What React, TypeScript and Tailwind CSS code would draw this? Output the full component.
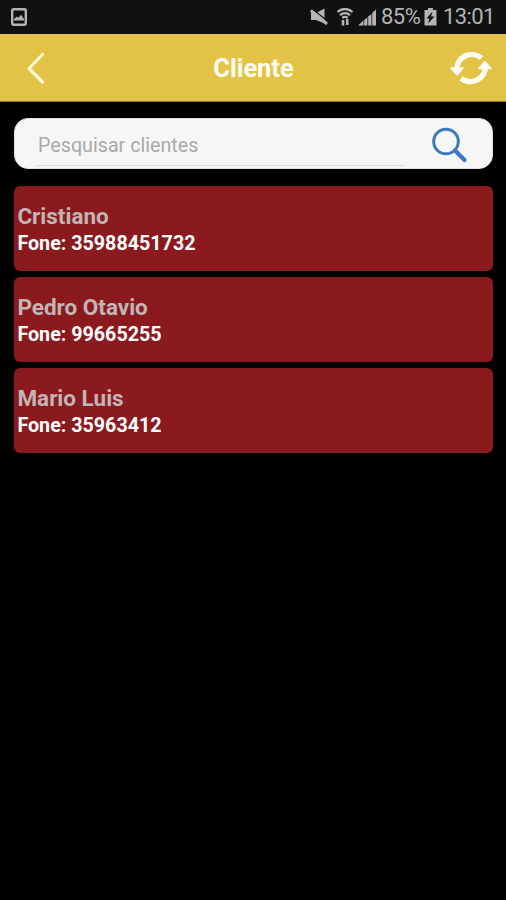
interface Client {
  name: string;
  phone: string;
}

const clients: Client[] = [
  { name: "Cristiano", phone: "35988451732" },
  { name: "Pedro Otavio", phone: "99665255" },
  { name: "Mario Luis", phone: "35963412" },
];

function StatusBar() {
  return (
    <div className="flex h-[34px] items-center bg-[#111111] pl-[11px] pr-[11px] text-[#b4b4b4]">
      <svg width="16" height="18" viewBox="0 0 16 18">
        <rect x="1.2" y="1.2" width="13.6" height="15.6" rx="1.5" fill="none" stroke="currentColor" strokeWidth="2.4" />
        <path d="M3 12.5V11l3-2.5 1.5 1.2 2.5-3 3 4.3v1.5z" fill="currentColor" />
      </svg>
      <div className="ml-auto flex items-center">
        <svg width="18" height="18" viewBox="0 0 18 18">
          <path d="M1 5h5l8.5-4.5v15L6 12H1z" fill="currentColor" />
          <path d="M2.5 1l16 13" stroke="#111111" strokeWidth="1.2" />
          <path d="M.8 2.5L17 16" stroke="currentColor" strokeWidth="3" />
        </svg>
        <svg className="ml-[8px]" width="18" height="18" viewBox="0 0 18 18" fill="none" stroke="currentColor">
          <path d="M1.5 4C6 0 12 0 16.5 4M4 7.2c3-2.7 7-2.7 10 0M6.3 10c1.7-1.4 3.7-1.4 5.4 0" strokeWidth="2.3" />
          <path d="M7 17.5V12M11.2 11v6" strokeWidth="2.6" />
        </svg>
        <svg className="ml-[4px]" width="19" height="18" viewBox="0 0 19 18" fill="currentColor">
          <path d="M0 17.5l5.5-5v5zM6.2 12l3.2-2.8v8.3H6.2zM10.2 8.5L13.4 6v11.5h-3.2zM14.2 5L18 1.5v16h-3.8z" />
        </svg>
        <span className="ml-[4px] w-[40px] whitespace-nowrap text-[22px] leading-[36px] tracking-[-0.5px]">85%</span>
        <svg className="ml-[3px]" width="13" height="18" viewBox="0 0 13 18">
          <path d="M4 0h5v2h3.5v15.5H.5V2H4z" fill="currentColor" />
          <path d="M8.5 3.5l-6 7h3L4 15.5l6.500-7H7z" fill="#111111" />
        </svg>
        <span className="ml-[6px] w-[52px] whitespace-nowrap text-[22px] leading-[36px] tracking-[-0.6px]">13:01</span>
      </div>
    </div>
  );
}

function Header() {
  return (
    <header className="grid h-[68px] grid-cols-[1fr_auto_1fr] items-center border-b border-[#8f7929] bg-[#e3c345] pl-[26px] pr-[14px]">
      <button className="w-[20px]">
        <svg width="20" height="34" viewBox="0 0 20 34" fill="none" stroke="#fff9dc" strokeWidth="3.2" strokeLinecap="round" strokeLinejoin="round">
          <path d="M16.5 3.5L3 17.5 16.5 31" />
        </svg>
      </button>
      <h1 className="mr-[11px] text-[25.4px] font-bold leading-[34px] text-[#fffdf5]">Cliente</h1>
      <button className="justify-self-end">
        <svg width="42" height="36" viewBox="0 0 42 36">
          <g fill="none" stroke="#fffef5" strokeWidth="5.5">
            <path d="M31.5 8A15 14.5 0 0 0 6.8 20" />
            <path d="M11 28.5A15 14.5 0 0 0 35.2 16" />
          </g>
          <path d="M1 18h12L7.2 25zM29 18.5h12l-6.2-7z" fill="#fffef5" stroke="#fffef5" strokeWidth="1.5" strokeLinejoin="round" />
        </svg>
      </button>
    </header>
  );
}

function SearchBox() {
  return (
    <div className="flex h-[51px] rounded-[14px] border border-[#dedede] bg-[#f6f6f6] pl-[21px]">
      <input
        className="mb-[2px] w-[369px] border-b border-[#dddddd] pl-[2px] pt-[7px] text-[19.7px] text-[#333333] outline-none placeholder:text-[#a9a9a9]"
        placeholder="Pesquisar clientes"
      />
      <svg className="ml-[27px] mt-[8px]" width="36" height="36" viewBox="0 0 36 36" fill="none" stroke="#3f78bd">
        <circle cx="14" cy="14.5" r="12.3" strokeWidth="3" />
        <path d="M23 23.5l9.500 9.500" strokeWidth="4.2" strokeLinecap="round" />
      </svg>
    </div>
  );
}

function ClientCard({ name, phone }: Client) {
  return (
    <li className="h-[85px] rounded-[6px] bg-[#8a1a1d] pl-[3.4px] pt-[17px]">
      <p className="text-[22.5px] font-bold leading-[27px] text-[#c3b5b5]">{name}</p>
      <p className="text-[19.7px] font-bold leading-[27px] text-white">Fone: {phone}</p>
    </li>
  );
}

export default function App() {
  return (
    <div className="min-h-screen bg-black font-['Roboto',sans-serif]">
      <StatusBar />
      <Header />
      <main className="pl-[14px] pr-[13px] pt-4">
        <SearchBox />
        <ul className="mt-[16.7px] flex flex-col gap-[6.4px]">
          {clients.map((client) => (
            <ClientCard key={client.phone} {...client} />
          ))}
        </ul>
      </main>
    </div>
  );
}
